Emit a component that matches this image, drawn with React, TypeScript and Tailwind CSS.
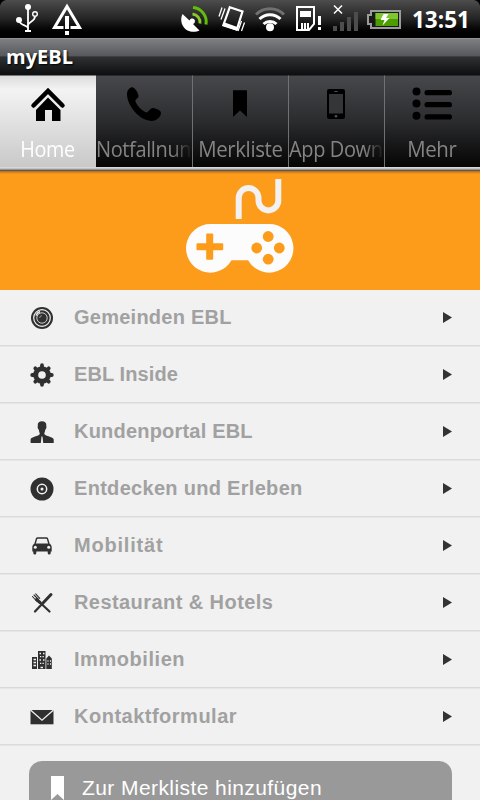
import type { ReactNode } from "react";
import clsx from "clsx";

function StatusBar() {
  return (
    <header className="relative flex h-[38px] bg-linear-to-b from-[#4d4d4d] via-[#242424] to-black">
      {/* Rounded display corners */}
      <svg className="absolute left-0 top-0 h-1.5 w-1.5" viewBox="0 0 6 6">
        <path d="M0 0H6Q1 1 0 6z" fill="#000" />
      </svg>
      <svg className="absolute right-0 top-0 h-1.5 w-1.5" viewBox="0 0 6 6">
        <path d="M6 0H0Q5 1 6 6z" fill="#000" />
      </svg>

      {/* USB */}
      <svg className="h-[38px] w-[45px]" viewBox="0 0 45 38" fill="none" stroke="#fff" strokeWidth="1.8">
        <path d="M28 8v23M19.5 20.5c0 5 7.5 4.5 8.5 7.5M35 16.5c0 5-6.5 5-7 8.5" />
        <circle cx="28" cy="7" r="3" fill="#fff" stroke="none" />
        <circle cx="19" cy="20" r="3" fill="#fff" stroke="none" />
        <circle cx="35" cy="14" r="2.3" strokeWidth="1.4" />
        <path d="M25 31h6" strokeWidth="2" />
      </svg>

      {/* Warning */}
      <svg className="h-[38px] w-[45px]" viewBox="45 0 45 38" fill="none" stroke="#fff">
        <path d="M63.5 27.5H54.5L67 6.5l12.5 21H70.5" strokeWidth="3" />
        <path d="M67 16v13M67 31v4" strokeWidth="4" />
      </svg>

      <div className="flex-1" />

      {/* GPS dish */}
      <svg className="h-[38px] w-9" viewBox="178 0 36 38" fill="none">
        <path d="M182.5 14C179.5 20 182 27.5 187.5 30.5C191.5 32.5 196.5 32 199.5 30.5L193 24a2.8 2.8 0 1 0-3.5-3.5z" fill="#fff" />
        <path d="M192.5 14a8.5 8.5 0 0 1 7.5 9.5" stroke="#8ac82c" strokeWidth="2.8" />
        <path d="M193 7.5a14.5 14.5 0 0 1 13 17" stroke="#63bd0b" strokeWidth="3" />
      </svg>

      {/* Vibrate */}
      <svg className="h-[38px] w-9" viewBox="214 0 36 38" fill="none" stroke="#fff">
        <path d="M229.8 7.2l12.7 4.3-5.7 18.2-13.5-4.5z" strokeWidth="2.2" />
        <path d="M223.5 24l14 5" strokeWidth="3.5" />
        <path d="M222 7.5l-3 9M225 8.5l-4 11M241.5 21l-3.5 10M244.5 22.5l-3 8.5" strokeWidth="1.3" />
      </svg>

      {/* Wifi */}
      <svg className="h-[38px] w-10" viewBox="250 0 40 38" fill="none" stroke="#fff" strokeWidth="3">
        <path d="M256 14.5a20 20 0 0 1 28 0" stroke="#717171" />
        <path d="M259.5 19a15 15 0 0 1 21 0" />
        <path d="M263.5 24a9.5 9.5 0 0 1 13 0" />
        <circle cx="270" cy="27.3" r="4" fill="#fff" stroke="none" />
      </svg>

      {/* Storage card */}
      <svg className="h-[38px] w-9" viewBox="290 0 36 38" fill="none" stroke="#fff">
        <path d="M297 7h17v17l-5 6h-12z" strokeWidth="2" />
        <path d="M300 11h11v6h-11zM301 23h8v6h-8z" fill="#fff" stroke="none" />
        <path d="M303.5 23v6M306.5 23v6" stroke="#222" strokeWidth="1" />
        <path d="M319.5 16v9M319.5 27v3" strokeWidth="3" />
      </svg>

      {/* Signal */}
      <svg className="h-[38px] w-9" viewBox="326 0 36 38" fill="#4d4d4d">
        <path d="M333 26h4v5h-4zM340 22h4v9h-4zM347 17h4v14h-4zM354 12h4v19h-4z" />
        <path d="M334 5.5l8 8M342 5.5l-8 8" stroke="#fff" strokeWidth="1.5" />
      </svg>

      {/* Battery */}
      <svg className="h-[38px] w-[44px]" viewBox="362 0 44 38" fill="none">
        <path d="M371 11h29v17h-29v-4h-3v-9h3z" fill="#191919" stroke="#9b9b9b" strokeWidth="2" />
        <path d="M375.5 13H398v13h-22.5z" fill="#4c9d00" />
        <path d="M375.5 13H398v6h-22.5z" fill="#7fc52d" />
        <path d="M383.5 14h5l-2.5 4h3.5l-7 7.5 2-5.5h-4z" fill="#fff" />
      </svg>

      <span className="w-[74px] pl-1.5 pt-px font-['Open_Sans'] text-[22.5px] font-bold leading-[38px] text-white">
        13:51
      </span>
    </header>
  );
}

const tabs: { label: string; icon: ReactNode }[] = [
  {
    label: "Home",
    icon: (
      <>
        <path d="M33.5 35.5L48 21l14.5 14.5" fill="none" stroke="#000" strokeWidth="4.5" strokeLinecap="round" />
        <path d="M48 27.5L60.5 40v11H52V40h-7v11h-9V40z" />
      </>
    ),
  },
  {
    label: "Notfallnun",
    icon: (
      <path d="M35 17.5C38.5 16 42 23 42.5 25.5C43 28 39.5 29 39.3 31C41 36 46 41 50.5 42.5C53 42 54 38 57 38C61 38.5 65 40.5 65 43C65 47 60 51 56 51C44 51 31 36 31 24C31 21 32.5 18.3 35 17.5z" />
    ),
  },
  {
    label: "Merkliste",
    icon: <path d="M41 20.3h14V47l-7-6.5-7 6.5z" />,
  },
  {
    label: "App Down",
    icon: (
      <>
        <rect x="39" y="19" width="18" height="30" rx="2" />
        <path d="M41 24h14v19.5H41z" fill="#353638" />
        <path d="M46.5 21.5h3" stroke="#555" />
        <circle cx="48" cy="46.3" r="1.3" fill="#555" />
      </>
    ),
  },
  {
    label: "Mehr",
    icon: (
      <>
        <circle cx="32.5" cy="21.5" r="4" />
        <circle cx="32.5" cy="33.5" r="4" />
        <circle cx="32.5" cy="45.7" r="4" />
        <rect x="40.5" y="20" width="27.5" height="5.3" rx="2.6" />
        <rect x="40.5" y="32" width="27.5" height="5.3" rx="2.6" />
        <rect x="40.5" y="44.3" width="27.5" height="5.3" rx="2.6" />
      </>
    ),
  },
];

function TabBar() {
  return (
    <nav className="h-24 bg-[#101113]">
      <div className="grid h-[92px] grid-cols-5">
        {tabs.map((tab, i) => (
          <div
            key={tab.label}
            className={clsx(
              "flex flex-col overflow-hidden border-t",
              i === 0
                ? "border-[#777] bg-linear-to-b from-[#dcdcdc] via-[#f3f3f3] via-15% to-[#c9c9c9]"
                : "border-[#28292b] bg-linear-to-b from-[#47484b] via-[#2b2c2e] via-50% to-[#060606]",
              i > 1 && "border-l border-l-[#707173]"
            )}
          >
            <svg className={clsx("h-[55px] w-24 shrink-0", i > 1 && "-ml-px")} viewBox="0 6 96 55">
              {tab.icon}
            </svg>
            {/* Long labels fade out at the tab's right edge */}
            <div
              className={clsx(
                "mt-[3px] flex overflow-hidden whitespace-nowrap font-['Open_Sans'] text-[21.5px] leading-[30px] tracking-[-0.4px]",
                i === 0 ? "text-white" : "text-[#848484]",
                i === 1 || i === 3 ? "mask-r-from-80% mask-r-to-100%" : "justify-center"
              )}
            >
              <span
                className={clsx(
                  "inline-block",
                  i === 0 && "scale-x-[0.92]",
                  i === 2 && "scale-x-[0.95]",
                  i === 4 && "mr-0.5 scale-x-[0.95]",
                  (i === 1 || i === 3) && "origin-left scale-x-[0.93]"
                )}
              >
                {tab.label}
              </span>
            </div>
          </div>
        ))}
      </div>
      <div className="h-1 bg-linear-to-b from-[#e2e3e4] via-[#b4b6b8] to-[#3c3c3c]" />
    </nav>
  );
}

function Hero() {
  return (
    <div className="h-[119px] bg-[#fd9b1a] bg-linear-to-b from-[#b66e13] to-[#fd9b1a] to-[3px]">
      <svg className="h-[119px] w-full" viewBox="0 171 480 119">
        <path
          d="M238.7 219V198a9.9 9.9 0 0 1 19.8 0v2.5a9.9 9.9 0 0 0 19.8 0V179"
          fill="none"
          stroke="#f2f2f2"
          strokeWidth="6"
        />
        <path
          d="M210.5 224H268.5a24.3 24.3 0 1 1-20.5 36.3H231.5A24.3 24.3 0 1 1 210.5 224z"
          fill="#fcfcfc"
        />
        <g fill="#fd9b1a">
          <rect x="196.5" y="243.2" width="26.7" height="7" rx="1" />
          <rect x="206.2" y="233.5" width="7" height="26.3" rx="1" />
          <circle cx="268.2" cy="236.5" r="5.4" />
          <circle cx="256.7" cy="248" r="5.4" />
          <circle cx="279.3" cy="248" r="5.4" />
          <circle cx="268.2" cy="259.2" r="5.4" />
        </g>
      </svg>
    </div>
  );
}

const menu: { label: string; tracking: string; icon: ReactNode }[] = [
  {
    label: "Gemeinden EBL",
    tracking: "tracking-[0.25px]",
    icon: (
      <>
        <circle cx="12" cy="12" r="11" />
        <g fill="none" stroke="#f1f1f1">
          <circle cx="12" cy="12" r="8.3" strokeWidth="1.2" />
          <circle cx="12" cy="12" r="5.2" strokeWidth="0.8" />
          <path d="M6 9.5a7 7 0 0 1 4-4" strokeWidth="1.5" />
          <path d="M9.7 12a2.5 2.5 0 0 1 2.3-2.5" strokeWidth="0.5" />
        </g>
      </>
    ),
  },
  {
    label: "EBL Inside",
    tracking: "tracking-[0.1px]",
    icon: (
      <>
        <circle cx="12" cy="12" r="8.8" />
        <path
          d="M12 2.2v19.6M2.2 12h19.6M5.3 5.3l13.4 13.4M18.7 5.3L5.3 18.7"
          stroke="#303030"
          strokeWidth="3.8"
          strokeLinecap="round"
        />
        <circle cx="12" cy="12" r="3.8" fill="#f1f1f1" />
      </>
    ),
  },
  {
    label: "Kundenportal EBL",
    tracking: "tracking-[0.2px]",
    icon: (
      <path d="M12 1.3c3 0 4.6 1.5 4.3 4.7.5 1.5-.2 3-1 3.8-.3 2-1 3-1 4.2 1 2.2 9.2 2.8 9.4 5.5V23H13.2l-.7-6.5h-1L10.8 23H.6v-3.5C.8 16.8 9 16.2 9.8 14c0-1.2-.8-2.2-1-4.2-.8-.8-1.5-2.3-1-3.8C7.4 2.8 9 1.3 12 1.3z" />
    ),
  },
  {
    label: "Entdecken und Erleben",
    tracking: "tracking-[0.3px]",
    icon: (
      <>
        <circle cx="12" cy="12" r="11.5" />
        <circle cx="12" cy="12" r="4.7" fill="none" stroke="#f1f1f1" strokeWidth="1.5" />
        <circle cx="12" cy="12" r="1.5" fill="#f1f1f1" />
      </>
    ),
  },
  {
    label: "Mobilität",
    tracking: "tracking-[0.8px]",
    icon: (
      <>
        <path d="M5 10L6.5 4.8Q6.8 4 7.7 4h8.6q.9 0 1.2.8L19 10" fill="none" stroke="#303030" strokeWidth="1.4" />
        <path d="M4.8 9.5h14.4c1.5.5 2.5 2 2.5 3.5v4.5h-1V19q0 1.500-1.5 1.5T17.7 19v-1.5H6.3V19q0 1.5-1.5 1.5T3.3 19v-1.5h-1V13c0-1.5 1-3 2.5-3.5z" />
        <circle cx="5.3" cy="13.2" r="1.5" fill="#f1f1f1" />
        <circle cx="18.7" cy="13.2" r="1.5" fill="#f1f1f1" />
      </>
    ),
  },
  {
    label: "Restaurant & Hotels",
    tracking: "tracking-[0.43px]",
    icon: (
      <g fill="none" stroke="#303030" strokeLinecap="round">
        <path d="M2.5 5.5l4 4.5M4 4l4.5 4.5M5.7 2.8l4 4.5" strokeWidth="1.1" />
        <path d="M6.5 8.5L10 11.5" strokeWidth="3" />
        <path d="M10 11.5l9.5 9" strokeWidth="2.2" />
        <path d="M21 3.5l-8 8.5" strokeWidth="3" />
        <path d="M12.5 12.5L5 20.5" strokeWidth="2.2" />
      </g>
    ),
  },
  {
    label: "Immobilien",
    tracking: "tracking-[0.55px]",
    icon: (
      <>
        <path d="M2 9h5v12H2zM8 3h7.5v18H8zM16.3 10.5L19 7.5l2.8 3V21h-5.5z" />
        <path
          d="M3.5 11.5h2.5M3.5 14.5h2.5M3.5 17.5h2.5M9.5 5.5h1.5M13 5.5h1.5M10 8.7h1.3M12.5 8.7h1.3M9.5 12h1.5M13 12h1.5M10 15.3h1.3M12.5 15.3h1.3M10.5 19.5h2.5M17.5 13h1M20 13h1M17.5 16h1M20 16h1"
          stroke="#f1f1f1"
          strokeWidth="1.3"
        />
      </>
    ),
  },
  {
    label: "Kontaktformular",
    tracking: "tracking-[0.5px]",
    icon: (
      <>
        <path d="M.5 5h23v14.3H.5z" />
        <path d="M.5 5l11.5 10.2L23.5 5" fill="none" stroke="#f1f1f1" strokeWidth="1.3" />
      </>
    ),
  },
];

export default function App() {
  return (
    <div className="flex h-screen w-[480px] flex-col overflow-hidden bg-[#f1f1f1] antialiased">
      <StatusBar />
      <div className="h-[37px] shrink-0 border-t border-[#8f9193] bg-[linear-gradient(#7d7f82,#55575a_48%,#303133_49%,#0d0e10)] pl-1.5">
        <h1 className="font-['Open_Sans'] text-[20px] font-bold leading-[35px] text-white [text-shadow:1px_1px_2px_#000]">
          myEBL
        </h1>
      </div>
      <TabBar />
      <Hero />

      <ul className="shrink-0">
        {menu.map((item) => (
          <li
            key={item.label}
            className="flex h-[57px] items-center border-b border-[#e6e6e6] pl-[30px] pr-7 shadow-[inset_0_-1px_#dadada]"
          >
            <svg className="h-6 w-6" viewBox="0 0 24 24" fill="#303030">
              {item.icon}
            </svg>
            <span
              className={clsx(
                "ml-5 flex-1 pb-[3px] font-['Liberation_Sans'] text-[20px] font-bold text-[#a1a1a1]",
                item.tracking
              )}
            >
              {item.label}
            </span>
            <svg className="mb-px h-[11px] w-[9px]" viewBox="0 0 9 11">
              <path d="M0 0l9 5.5L0 11z" fill="#333" />
            </svg>
          </li>
        ))}
      </ul>

      <button className="ml-[29px] mt-[15px] flex h-[54px] w-[423px] shrink-0 items-center rounded-[13px] bg-[#999] pl-[22px] font-['Liberation_Sans'] text-[21px] tracking-[0.42px] text-white">
        <svg className="h-6 w-[13px]" viewBox="0 0 13 24" fill="#fff">
          <path d="M0 0h13v24l-6.5-6L0 24z" />
        </svg>
        <span className="ml-[18px]">Zur Merkliste hinzufügen</span>
      </button>
    </div>
  );
}
